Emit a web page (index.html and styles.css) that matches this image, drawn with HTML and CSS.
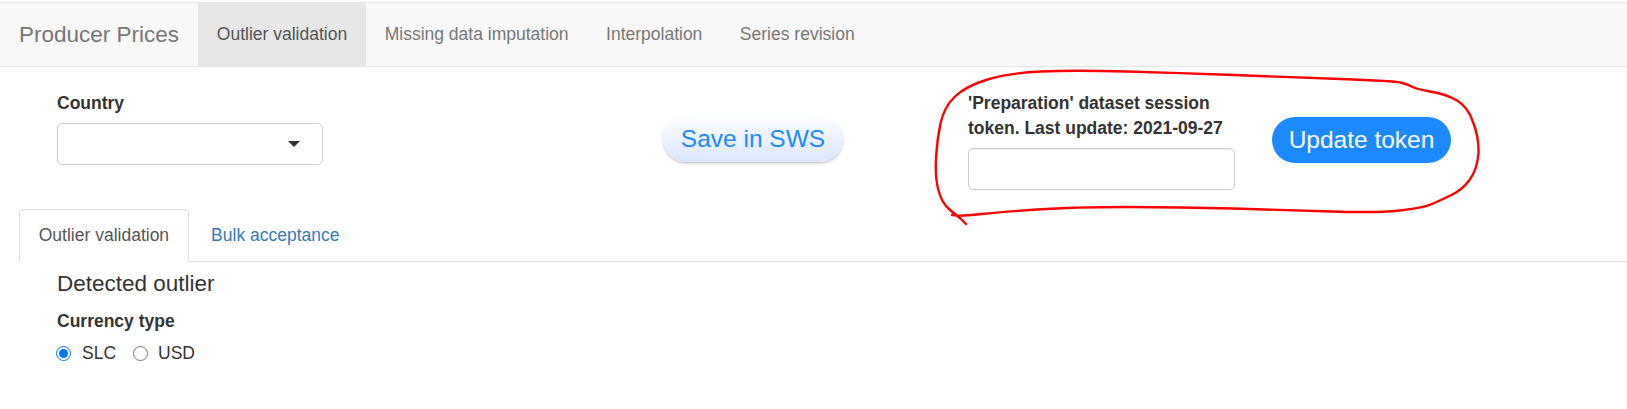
FILE: index.html
```html
<!DOCTYPE html>
<html lang="en">
<head>
<meta charset="utf-8">
<title>Producer Prices</title>
<link rel="stylesheet" href="styles.css">
</head>
<body>
<nav class="navbar">
  <span class="brand">Producer Prices</span>
  <ul class="nav">
    <li class="active"><a>Outlier validation</a></li>
    <li><a>Missing data imputation</a></li>
    <li><a>Interpolation</a></li>
    <li><a>Series revision</a></li>
  </ul>
</nav>

<div class="top-row">
  <div class="col-country">
    <label class="lbl">Country</label>
    <div class="select"><span class="caret"></span></div>
  </div>
  <div class="col-save">
    <button class="btn-save">Save in SWS</button>
  </div>
  <div class="col-token">
    <label class="lbl">'Preparation' dataset session token. Last update: 2021-09-27</label>
    <input class="token-input" type="text">
  </div>
  <div class="col-update">
    <button class="btn-update">Update token</button>
  </div>
</div>

<div class="tabset">
  <ul class="tabs">
    <li class="active"><a>Outlier validation</a></li>
    <li><a>Bulk acceptance</a></li>
  </ul>
  <div class="tab-content">
    <h4 class="section-title">Detected outlier</h4>
    <label class="lbl">Currency type</label>
    <div class="radios">
      <label class="radio-opt first"><input type="radio" name="cur" checked><span class="radio-text">SLC</span></label>
      <label class="radio-opt second"><input type="radio" name="cur"><span class="radio-text">USD</span></label>
    </div>
  </div>
</div>

<svg class="annotation" width="1627" height="409" viewBox="0 0 1627 409" xmlns="http://www.w3.org/2000/svg">
  <path d="M966 224 L961 219 Q956 215 949 209 Q942 203 938.5 190.5 Q935 178 936 159 Q937 140 940.5 123.5 Q944 107 955 96.5 Q966 86 987.5 79.5 Q1009 73 1041 71.5 Q1073 70 1126.5 71.5 Q1180 73 1233.5 75 Q1287 77 1340.5 79 Q1394 81 1400.5 82.5 Q1407 84 1411.5 86.5 Q1416 89 1430 91.5 Q1446 94 1457 100.5 Q1468 107 1473 122 Q1479 137 1478.5 153.5 Q1477 170 1469.5 180 Q1462 190 1451.5 195 Q1441 200 1432 204 Q1423 208 1399.5 210.5 Q1376 213 1331.5 211.5 Q1287 210 1233.5 208.5 Q1180 207 1126.5 207 Q1073 207 1037 209.5 Q1001 212 981.5 214 Q962 216 957 215.5 L952 215" fill="none" stroke="#ff0000" stroke-width="2.4" stroke-linecap="round" stroke-linejoin="round"/>
</svg>
</body>
</html>
```

FILE: styles.css
```css
* {
  box-sizing: border-box;
}

body {
  margin: 0;
  font-family: "Liberation Sans", Arial, Helvetica, sans-serif;
  font-size: 17.5px;
  line-height: 25px;
  color: #333333;
  background: #ffffff;
}

/* ---------- navbar ---------- */
.navbar {
  margin-top: 2px;
  height: 65px;
  display: flex;
  background: #f8f8f8;
  border-top: 1px solid #e7e7e7;
  border-bottom: 1px solid #e7e7e7;
}

.brand {
  padding: 0 19px 0 19px;
  font-size: 22.5px;
  line-height: 63px;
  color: #777777;
}

.nav {
  display: flex;
  list-style: none;
  margin: 0;
  padding: 0;
}

.nav a {
  display: block;
  padding: 0 18.75px;
  line-height: 63px;
  color: #777777;
}

.nav .active a {
  background: #e7e7e7;
  color: #555555;
}

/* ---------- top row ---------- */
.top-row {
  display: flex;
  align-items: flex-start;
  margin-top: 24px;
  padding-left: 57px;
}

.col-country {
  width: 606px;
}

.col-save {
  width: 305px;
  padding-top: 25px;
}

.col-token {
  width: 304px;
}

.col-update {
  padding-top: 26px;
}

.lbl {
  display: block;
  font-weight: bold;
  margin-bottom: 7px;
}

.col-token .lbl {
  width: 267px;
}

.select {
  width: 266px;
  height: 42px;
  border: 1px solid #cccccc;
  border-radius: 5px;
  background: #ffffff;
  display: flex;
  align-items: center;
  justify-content: flex-end;
  padding-right: 22px;
}

.caret {
  width: 0;
  height: 0;
  border-left: 6px solid transparent;
  border-right: 6px solid transparent;
  border-top: 6px solid #333333;
}

.token-input {
  display: block;
  width: 267px;
  height: 42px;
  margin: 0;
  border: 1px solid #cccccc;
  border-radius: 5px;
  background: #ffffff;
  box-shadow: inset 0 1px 1px rgba(0, 0, 0, 0.075);
  font: inherit;
}

.btn-save {
  display: block;
  width: 180px;
  height: 46px;
  padding: 0;
  border: none;
  border-radius: 23px;
  font-family: "Liberation Sans", Arial, sans-serif;
  font-size: 24.5px;
  color: #1d89ff;
  background: linear-gradient(180deg, #fcfdff 0%, #dbe6ff 100%);
  box-shadow: 0 1px 2px rgba(0, 0, 0, 0.12), 0 2px 3px rgba(0, 0, 0, 0.12);
}

.btn-update {
  display: block;
  width: 179px;
  height: 46px;
  padding: 0;
  border: none;
  border-radius: 23px;
  font-family: "Liberation Sans", Arial, sans-serif;
  font-size: 24.5px;
  color: #ffffff;
  background: #1d89ff;
}

/* ---------- tabset ---------- */
.tabset {
  margin-top: 19px;
  padding-left: 19px;
}

.tabs {
  display: flex;
  list-style: none;
  margin: 0;
  padding: 0;
  border-bottom: 1px solid #dddddd;
}

.tabs li {
  margin-bottom: -1px;
  margin-right: 2.5px;
}

.tabs a {
  display: block;
  padding: 13px 18.75px 12.5px;
  line-height: 25px;
  border: 1px solid transparent;
  border-radius: 5px 5px 0 0;
  color: #337ab7;
}

.tabs .active a {
  color: #555555;
  background: #ffffff;
  border-color: #dddddd #dddddd transparent;
}

.tab-content {
  padding-left: 38px;
}

.section-title {
  margin: 10px 0 12.5px;
  font-size: 22.5px;
  font-weight: normal;
  line-height: 1.1;
}

.radios {
  display: flex;
  align-items: center;
  height: 25px;
}

.radio-opt {
  display: flex;
  align-items: center;
}

.radio-opt input {
  width: 15px;
  height: 15px;
  margin: 0;
}

.radio-opt.first {
  margin-left: -1px;
}

.radio-opt.second {
  margin-left: 17px;
}

.radio-opt.first .radio-text {
  margin-left: 11px;
}

.radio-opt.second .radio-text {
  margin-left: 10px;
}

/* ---------- annotation overlay ---------- */
.annotation {
  position: absolute;
  top: 0;
  left: 0;
  pointer-events: none;
}
```
